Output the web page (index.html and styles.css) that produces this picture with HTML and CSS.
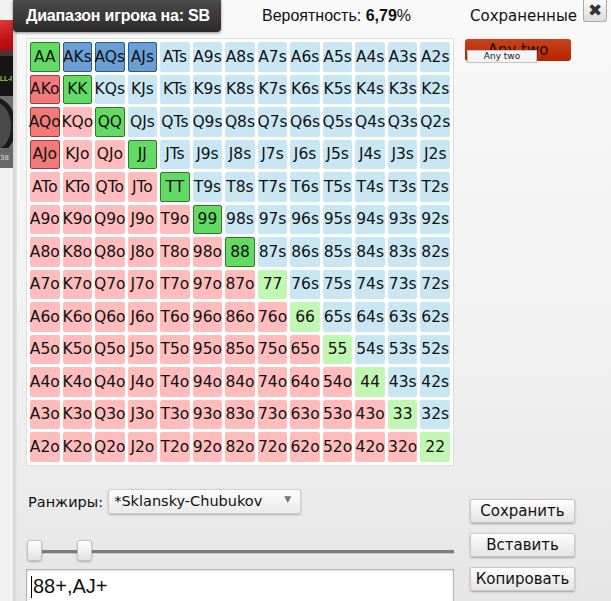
FILE: index.html
```html
<!DOCTYPE html>
<html lang="ru">
<head>
<meta charset="UTF-8" />
<title>Диапазон игрока</title>
<link rel="stylesheet" href="styles.css">
</head>
<body>

<div class="table-strip">
  <div class="strip-top"></div>
  <div class="strip-red"></div>
  <div class="strip-dark"><span class="allin">LL-I</span></div>
  <div class="strip-seat"><div class="seat-ring"></div></div>
  <div class="strip-stack">38</div>
  <div class="strip-rest"></div>
</div>

<div class="dialog">
  <div class="dialog-head">
    <div class="title">Диапазон игрока на: SB</div>
    <div class="odds">Вероятность: <b>6,79</b>%</div>
    <div class="saved-title">Сохраненные</div>
    <div class="close">✖</div>
  </div>

  <div class="dialog-body">
    <div class="hand-box">
      <div class="hand-grid" id="handGrid"></div>
    </div>

    <div class="saved-list">
      <div class="saved-item">Any two
        <span class="saved-tip">Any two</span>
      </div>
    </div>

    <div class="controls">
      <div class="range-row">
        <span class="range-label">Ранжиры:</span>
        <div class="select">*Sklansky-Chubukov<span class="arrow">▼</span></div>
      </div>
      <div class="slider">
        <div class="track"></div>
        <div class="thumb" style="left: 0%"></div>
        <div class="thumb" style="left: 11.7%"></div>
      </div>
      <div class="range-input"><span class="caret"></span>88+,AJ+</div>
    </div>

    <div class="buttons">
      <button class="btn">Сохранить</button>
      <button class="btn">Вставить</button>
      <button class="btn">Копировать</button>
    </div>
  </div>
</div>

<script>
  const ranks = 'AKQJT98765432'.split('');
  const grid = document.getElementById('handGrid');

  for (let i = 0; i < 13; i++) {
    for (let j = 0; j < 13; j++) {
      const cell = document.createElement('div');
      let kind, on;
      if (i === j) {
        cell.textContent = ranks[i] + ranks[j];
        kind = 'pair';
        on = i <= 6;           // 88+
      } else if (j > i) {
        cell.textContent = ranks[i] + ranks[j] + 's';
        kind = 'suited';
        on = i === 0 && j <= 3; // AJs+
      } else {
        cell.textContent = ranks[j] + ranks[i] + 'o';
        kind = 'offsuit';
        on = j === 0 && i <= 3; // AJo+
      }
      cell.className = 'hand ' + kind + (on ? ' on' : '');
      grid.appendChild(cell);
    }
  }
</script>

</body>
</html>
```

FILE: styles.css
```css
body {
  margin: 0;
  width: 611px;
  height: 601px;
  overflow: hidden;
  display: flex;
  font-family: "DejaVu Sans", sans-serif;
  color: #111;
  background: #eee;
}

/* bit of the poker table visible behind the dialog */
.table-strip {
  width: 13px;
  display: flex;
  flex-direction: column;
  flex-shrink: 0;
}
.strip-top { height: 20px; background: #f1f1f1; }
.strip-red {
  height: 31px;
  background: linear-gradient(160deg, #e53a3a, #c01212 60%, #a80d0d);
}
.strip-dark {
  height: 40px;
  background: #151515;
  border-top: 5px solid #3a3a3a;
  overflow: hidden;
}
.allin {
  display: block;
  margin-top: 19px;
  font: bold 7px "Liberation Sans", sans-serif;
  letter-spacing: -0.3px;
  color: #9c3;
  white-space: nowrap;
}
.strip-seat {
  height: 52px;
  background: #6f6f6f;
  overflow: hidden;
  position: relative;
}
.seat-ring {
  position: absolute;
  left: -24px;
  top: 2px;
  width: 30px;
  height: 46px;
  border-radius: 50%;
  border: 5px solid #1a1a1a;
  background: #4a4a4a;
}
.strip-stack {
  height: 20px;
  background: #686868;
  color: #ddd;
  font-size: 7px;
  line-height: 20px;
}
.strip-rest { flex: 1; background: #f2f2f2; }

/* dialog */
.dialog {
  flex: 1;
  display: flex;
  flex-direction: column;
  background:
    linear-gradient(to right, #d3d3d3, #e6e6e6 4px, transparent 4px),
    linear-gradient(#f9f9f9, #f1f1f1 60%, #e6e6e6);
}

.dialog-head {
  display: flex;
  align-items: flex-start;
  height: 32px;
}
.title {
  width: 195px;
  height: 32px;
  padding-left: 13px;
  font: bold 16px/32px "Liberation Sans", sans-serif;
  letter-spacing: -0.2px;
  white-space: nowrap;
  color: #fff;
  background: linear-gradient(#4b4b4b, #2a2a2a);
  border-radius: 0 0 4px 4px;
  box-shadow: 0 1px 3px rgba(0,0,0,0.45);
}
.odds {
  margin-left: 41px;
  font: 16px/32px "Liberation Sans", sans-serif;
}
.odds b { font-weight: bold; }
.saved-title {
  margin-left: auto;
  font-size: 15px;
  line-height: 32px;
}
.close {
  width: 22px;
  height: 21px;
  margin: 0 4px 0 6px;
  text-align: center;
  font-size: 17px;
  line-height: 21px;
  color: #333;
  background: linear-gradient(#fafafa, #dcdcdc);
  border: 1px solid #aaa;
  border-top: none;
  border-radius: 0 0 3px 3px;
}

.dialog-body {
  display: grid;
  grid-template-columns: 428px 110px;
  column-gap: 11px;
  padding: 6px 0 0 13px;
}

.hand-box {
  background: #fff;
  border: 1px solid #dedede;
  padding: 3px;
}
.hand-grid {
  display: grid;
  grid-template-columns: repeat(13, minmax(0, 1fr));
  grid-auto-rows: 29.5px;
  gap: 3px;
  width: 420px;
}
.hand {
  display: flex;
  align-items: center;
  justify-content: center;
  min-width: 0;
  font-size: 15.5px;
  white-space: nowrap;
  border-radius: 2px;
  border: 1px solid transparent;
}
.pair { background: #c2f7b3; }
.suited { background: #c9e7f3; }
.offsuit { background: #ffbcbc; }
.pair.on { background: #63da63; border-color: #2f7a2f; }
.suited.on { background: #6a9fd5; border-color: #2c5b8a; }
.offsuit.on { background: #f37a7a; border-color: #a43838; }

.saved-list {
  padding-top: 1px;
}
.saved-item {
  position: relative;
  width: 106px;
  height: 22px;
  line-height: 22px;
  text-align: center;
  font-size: 15px;
  color: #2a0a05;
  background: linear-gradient(#c8421d, #bd3210 55%, #b32500);
  border-radius: 3px;
}
.saved-tip {
  position: absolute;
  left: 2px;
  top: 11px;
  width: 68px;
  height: 11px;
  line-height: 11px;
  font-size: 9px;
  color: #222;
  background: #f4f4f4;
  border: 1px solid #c4c4c4;
}

.controls {
  padding-top: 24px;
}
.range-row {
  display: flex;
  align-items: center;
  height: 24px;
}
.range-label {
  margin-left: 2px;
  font-size: 14.5px;
}
.select {
  position: relative;
  margin-left: 5px;
  width: 186px;
  height: 23px;
  padding-left: 5px;
  line-height: 23px;
  font-size: 14.5px;
  background: linear-gradient(#fdfdfd, #eaeaea);
  border: 1px solid #cdcdcd;
  border-radius: 3px;
  box-shadow: 0 1px 2px rgba(0,0,0,0.25);
}
.arrow {
  position: absolute;
  right: 9px;
  top: -2px;
  font-size: 9px;
  color: #777;
}

.slider {
  position: relative;
  height: 20px;
  margin-top: 26px;
  margin-left: 1px;
}
.track {
  position: relative;
  top: 10px;
  height: 3px;
  background: #7b7b7b;
  border-bottom: 1px solid #c8c8c8;
}
.thumb {
  position: absolute;
  top: 0;
  width: 13px;
  height: 19px;
  background: linear-gradient(#ffffff, #e2e2e2);
  border: 1px solid #c2c2c2;
  border-radius: 3px;
  box-shadow: 0 1px 2px rgba(0,0,0,0.25);
}

.range-input {
  display: flex;
  align-items: center;
  height: 34px;
  margin-top: 9px;
  padding-left: 4px;
  font: 20px "Liberation Sans", sans-serif;
  background: #fff;
  border: 1px solid #b5b5b5;
  box-shadow: inset 0 1px 2px rgba(0,0,0,0.15);
}
.caret {
  width: 1px;
  height: 22px;
  background: #000;
  margin-right: 1px;
}

.buttons {
  display: flex;
  flex-direction: column;
  gap: 10px;
  padding: 33px 0 0 5px;
}
.btn {
  width: 105px;
  height: 24px;
  padding: 0;
  font: 15px "DejaVu Sans", sans-serif;
  color: #111;
  background: linear-gradient(#fefefe, #e4e4e4);
  border: 1px solid #c9c9c9;
  border-radius: 2px;
  box-shadow: 0 1px 2px rgba(0,0,0,0.3);
}
```
